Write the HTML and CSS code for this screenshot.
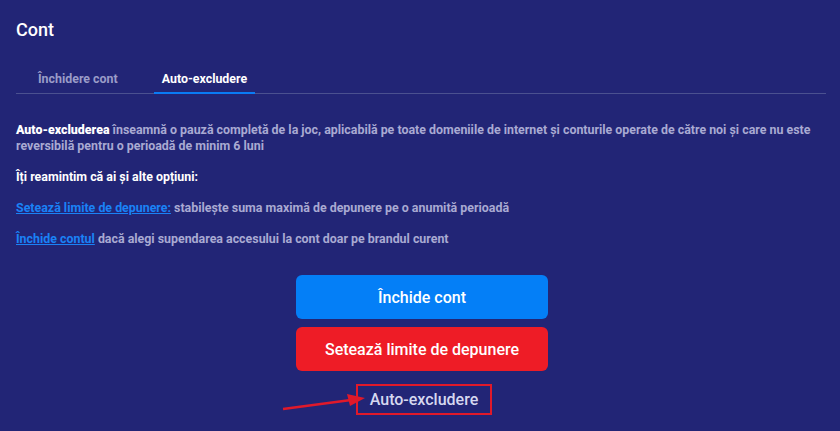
FILE: index.html
```html
<!DOCTYPE html>
<html lang="ro">
<head>
    <meta charset="UTF-8">
    <title>Cont</title>
    <link rel="stylesheet" href="styles.css">
</head>
<body>
    <div class="page">
        <h1 class="title">Cont</h1>

        <div class="tabs">
            <a class="tab">Închidere cont</a>
            <a class="tab active">Auto-excludere</a>
        </div>

        <div class="content">
            <p class="text"><strong>Auto-excluderea</strong> înseamnă o pauză completă de la joc, aplicabilă pe toate domeniile de internet și conturile operate de către noi și care nu este reversibilă pentru o perioadă de minim 6 luni</p>
            <p class="text strong">Îți reamintim că ai și alte opțiuni:</p>
            <p class="text"><a class="link">Setează limite de depunere:</a> stabilește suma maximă de depunere pe o anumită perioadă</p>
            <p class="text"><a class="link">Închide contul</a> dacă alegi supendarea accesului la cont doar pe brandul curent</p>
        </div>

        <div class="actions">
            <button class="btn btn-blue">Închide cont</button>
            <button class="btn btn-red">Setează limite de depunere</button>
            <div class="marked">
                <svg class="arrow" width="90" height="20" viewBox="0 0 90 20">
                    <line x1="2" y1="15" x2="70" y2="6" stroke="#e0192a" stroke-width="2.5"/>
                    <polygon points="84,4 66,0 69,12" fill="#e0192a"/>
                </svg>
                <span class="btn-text">Auto-excludere</span>
            </div>
        </div>
    </div>
</body>
</html>
```

FILE: styles.css
```css
body {
    margin: 0;
    background: #222576;
    font-family: Roboto, "Liberation Sans", sans-serif;
}

.page {
    padding: 18px 12px 0 16px;
}

.title {
    margin: 0;
    font-size: 18px;
    line-height: 24px;
    font-weight: 500;
    color: #ffffff;
}

.tabs {
    display: flex;
    gap: 28px;
    margin-top: 21px;
    margin-right: 2px;
    padding-left: 14px;
    border-bottom: 1px solid #4b5190;
}

.tab {
    padding: 8px 8px 6px;
    font-size: 12.4px;
    line-height: 15px;
    font-weight: 700;
    color: #9a9cc8;
    border-bottom: 2px solid transparent;
    margin-bottom: -1px;
}

.tab.active {
    color: #ffffff;
    border-bottom-color: #0a7bf5;
}

.content {
    padding-top: 28px;
    padding-right: 2px;
}

.text {
    margin: 0 0 15px;
    font-size: 12.4px;
    line-height: 16px;
    font-weight: 700;
    color: #a9aad2;
}

.text strong,
.text.strong {
    color: #ffffff;
}

.link {
    color: #1a82f7;
    text-decoration: underline;
}

.actions {
    display: flex;
    flex-direction: column;
    align-items: center;
    gap: 8px;
    margin-top: 28px;
}

.btn {
    width: 252px;
    height: 44px;
    border: none;
    border-radius: 6px;
    font-family: inherit;
    font-size: 16px;
    font-weight: 500;
    color: #ffffff;
}

.btn-blue {
    background: #047ff7;
}

.btn-red {
    background: #ee1c26;
}

.marked {
    position: relative;
    margin: 5px 0 0 4px;
    width: 132px;
    height: 27px;
    border: 2px solid #e0192a;
    display: flex;
    align-items: center;
    justify-content: center;
}

.btn-text {
    font-size: 16px;
    font-weight: 500;
    color: #d6d8f0;
}

.arrow {
    position: absolute;
    left: -77px;
    top: 8px;
}
```
